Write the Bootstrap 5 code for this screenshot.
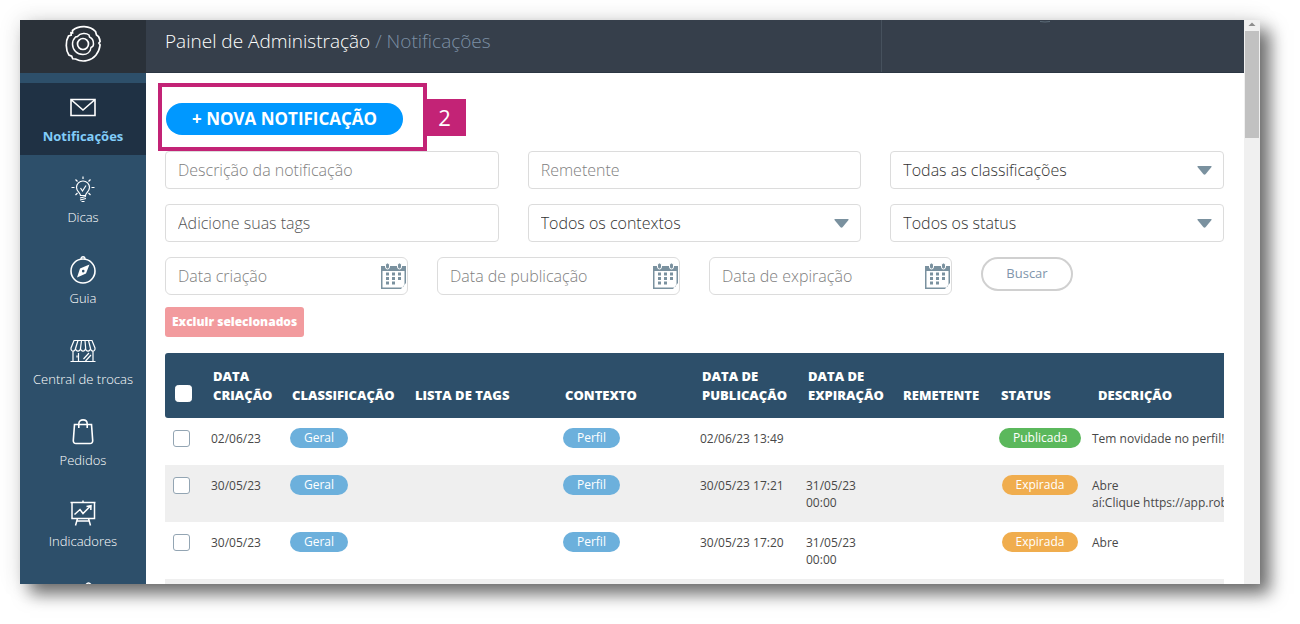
<!DOCTYPE html>
<html lang="pt-BR">
<head>
<meta charset="utf-8">
<meta name="viewport" content="width=device-width, initial-scale=1">
<title>Painel de Administração / Notificações</title>
<link href="https://cdn.jsdelivr.net/npm/bootstrap@5.3.0/dist/css/bootstrap.min.css" rel="stylesheet">
<style>
:root{--navy:#2d4f6a;--line:#dcdcdc;--magenta:#c32376}
body{font-family:"Open Sans","Noto Sans",sans-serif;background:#fff;height:100vh;padding:20px 40px 40px 20px;overflow:hidden}
.app-frame{background:#fff;box-shadow:0 0 22px rgba(0,0,0,.12),10px 10px 16px rgba(0,0,0,.55)}
.side-bar{width:126px;background:var(--navy)}
.side-logo{height:53px;background:#2a3139;margin-bottom:10px}
.side-item{height:72px;margin-bottom:9px;padding-top:11px;color:#fff;font-size:13px;font-weight:300;line-height:20px;gap:4px}
.side-item.active{background:#1f3144;color:#82cdf9;font-weight:700}
.side-item svg{width:28px;height:28px;fill:none;stroke:#fff;stroke-width:1.3}
.top-bar{height:53px;background:#363f4b;border-bottom:1px solid #2b3643;font-size:19px;font-weight:300;line-height:43px}
.top-bar a{color:#fff}
.top-bar .crumb-here{color:#7d90a5}
.top-title{width:736px;padding-left:19px;border-right:1px solid #46515d}
.top-user{padding-left:158px;padding-top:1px}
.callout{margin-left:12px;margin-top:10px}
.callout-box{border:4px solid var(--magenta);padding:16px 20px 12px 4px}
.callout-num{background:var(--magenta);color:#fff;font-size:22px;line-height:37px;width:39px;height:37px;padding-right:4px;margin-top:16px}
.btn-new{background:#0098ff;color:#fff;font-size:17px;font-weight:700;line-height:32px;padding:0 26px}
.page-pad{padding:0 20px 0 19px}
.filters{gap:15px}
.filter-row{display:grid;grid-template-columns:repeat(3,1fr);gap:15px 29px}
.date-row{gap:29px}
.date-row .date-box{width:243px}
.field{height:38px;border:1px solid var(--line);border-radius:4px;font-size:16px;font-weight:300;line-height:24px;padding:0 12px;color:#333;background-color:#fff}
.field::placeholder{color:#808080;opacity:1}
.tags-field::placeholder{color:#555}
.date-box .field{border-radius:6px}
.date-box svg{right:1px;top:6px}
select.field{background-image:url("data:image/svg+xml,%3Csvg xmlns='http://www.w3.org/2000/svg' viewBox='0 0 15 9'%3E%3Cpath d='M1 0h13q1 0 .5 1L8.500 8.300q-1 .9-2 0L.500 1Q0 0 1 0z' fill='%237a919f'/%3E%3C/svg%3E");background-size:15px 9px;background-position:right 11px center}
.btn-search{border:2px solid #d0d0d0;color:#7f95ab;font-size:13px;width:92px;height:34px;padding:0}
.btn-drop{background:#f29b9e;color:#fff;font-size:12px;font-weight:800;height:30px;padding:0 7px;border-radius:3px;margin:12px 0 16px}
.grid-table{table-layout:fixed;font-size:12px;line-height:17px;color:#484848;margin:0}
.grid-table th{background:var(--navy);color:#fff;font-size:13px;line-height:19px;font-weight:800;padding:14px 10px 13px;vertical-align:bottom;white-space:nowrap}
.grid-table td{padding:10px 8px 11px;white-space:nowrap;line-height:17px;height:47px;overflow:hidden;background:#fff;vertical-align:top}
.grid-table tbody tr:nth-child(even) td{background:#efefef}
.grid-table thead th:first-child{border-radius:3px 0 0 3px;padding-bottom:16px}
.grid-table td:last-child{padding-left:4px;padding-right:0}
.grid-table .cell-text{padding-top:2px}
.row-check{width:17px;height:17px;border:1px solid #93a5b3;margin:2px 0 0;display:block}
.head-check{border-color:#fff}
.pill{border-radius:10px;color:#fff;line-height:20px;height:20px;padding:0 14px;display:inline-block;vertical-align:top}
.pill-blue{background:#6cb0dc}.pill-green{background:#5bb85c}.pill-amber{background:#f0ad4e}
.status-box{width:82px;text-align:center}
.fake-scroll{width:16px;background:#f0f0f0}
.fake-scroll span{height:107px;margin:3px 1px 0;background:#c1c1c1}
</style>
</head>
<body>
<div class="app-frame d-flex h-100">
  <nav class="side-bar flex-shrink-0 overflow-hidden" aria-label="Menu principal">
    <div class="side-logo d-flex justify-content-center pt-1">
      <svg width="38" height="40" viewBox="0 0 38 40" fill="none" stroke="#fff" stroke-width="1.7"><circle cx="19" cy="20" r="5.500"/><path d="M19 9.500c3-.4 4.500.3 6 1.500l.5 2c2.500 1 4 4 4 7 0 2-1 3-2.500 3.500-.5 4.500-4 7-8 7-6 0-10.500-4.500-10.500-10.500 0-3 1-5 3-7l2-.5c1.500-2 3-2.800 5.500-3z" stroke-width="1.500"/><path d="M8.500 6.500C15 .8 26 1.500 31.500 7.500l1 3.500 2 1.500c.8 1.500 1.500 3 1.600 5l-1.200 1.500 1.200 2c-1 8-6 14-13 15.500-4 1-8 .4-11.600-1.500l-2.800-.2-1-2.600-2.800-1.200C1.500 26 1.500 17 4.500 12l2.700-.8-.2-2.500 1.500.3z"/></svg>
    </div>
    <a href="#" class="side-item active d-flex flex-column align-items-center text-decoration-none" aria-current="page">
      <svg viewBox="0 0 28 28"><path d="M2 5.500h24v16H2zM2.500 6 14 16 25.500 6" stroke-width="1.600"/></svg>Notificações</a>
    <a href="#" class="side-item d-flex flex-column align-items-center text-decoration-none">
      <svg viewBox="0 0 28 28"><path d="M11.500 20.500c0-2.500-4-4-4-8a6.500 6.500 0 0 1 13 0c0 4-4 5.500-4 8zM11 23l6-1.500M11 25l6-1.500M12.500 26.500h3M11.500 13l2 3 3.500-5.500M14 1.500V4M6.500 4.500l2 2M21.500 4.500l-2 2M2.500 12.500h3M22.500 12.500h3M6.500 20l2-2M21.500 20l-2-2" stroke-width="1.200"/></svg>Dicas</a>
    <a href="#" class="side-item d-flex flex-column align-items-center text-decoration-none">
      <svg viewBox="0 0 28 28"><circle cx="14" cy="15" r="12" stroke-width="1.600"/><path d="M12 3c0-3 4-3 4 0"/><path fill="#fff" fill-rule="evenodd" stroke="none" d="M20.500 8.500 17 17.500 8 21.500l3-9zM14.200 13.800a1.300 1.300 0 1 0 .1 2.600 1.300 1.300 0 0 0-.1-2.600z"/></svg>Guia</a>
    <a href="#" class="side-item d-flex flex-column align-items-center text-decoration-none">
      <svg viewBox="0 0 28 28"><path d="M5 3.500h18l3 7.500c.5 4-4 4-4.500.5-.5 3.500-4.500 3.500-5 0-.5 3.500-4.500 3.500-5 0-.5 3.500-4.500 3.500-5 0C6 15 1.500 15 2 11zM9 3.500 6.500 11.500M12.500 3.500l-1 8M16 3.500l.7 8M19.500 3.500l2 8M4 14v10.500M9.500 16v8.500M24 14v10.500M1.500 24.500h25M14.500 22l5.500-6M16.500 24l5.500-6M8 18.500v2" stroke-width="1.200"/></svg>Central de trocas</a>
    <a href="#" class="side-item d-flex flex-column align-items-center text-decoration-none">
      <svg viewBox="0 0 28 28"><path d="M5.500 6.500h17l1.200 16c.1 2-1 3-2.700 3H7c-1.700 0-2.800-1-2.700-3zM9.800 10V6c0-5.500 8.400-5.500 8.400 0v4" stroke-width="1.600"/></svg>Pedidos</a>
    <a href="#" class="side-item d-flex flex-column align-items-center text-decoration-none">
      <svg viewBox="0 0 28 28"><path d="M1.500 3.500h25M3 3.500v16h22.500v-16M14 1.500v2M8.500 19.500l-2 7M19.500 19.500l2 7M8 22h12.500M5.500 15.500l5.500-5 3 4 7.500-7.500M17.500 7.500l4.500-.8-.2 4.300" stroke-width="1.500"/></svg>Indicadores</a>
    <a href="#" class="side-item d-flex flex-column align-items-center" aria-label="Próximo item">
      <svg viewBox="0 0 28 28"><path d="M17 4.500q2.500-3 5 0v6h-5z"/></svg></a>
  </nav>

  <div class="flex-grow-1 d-flex flex-column overflow-hidden">
    <header class="top-bar flex-shrink-0 d-flex">
      <div class="top-title"><a href="#" class="text-decoration-none">Painel de Administração</a> <span class="crumb-here">/ Notificações</span></div>
      <div class="top-user d-flex align-items-start"><svg width="10" height="2" viewBox="0 0 10 2" fill="none" stroke="#5c6c78" aria-hidden="true"><path d="M0 .5q5 1 10 0"/></svg></div>
    </header>
    <main class="overflow-hidden">
      <div class="callout d-flex align-items-start">
        <div class="callout-box"><button type="button" class="btn btn-new rounded-pill border-0 d-block">+ NOVA NOTIFICAÇÃO</button></div>
        <div class="callout-num text-center">2</div>
      </div>
      <div class="page-pad">
        <form class="filters d-flex flex-column">
          <div class="filter-row">
            <input class="form-control field" type="text" placeholder="Descrição da notificação" aria-label="Descrição da notificação">
            <input class="form-control field" type="text" placeholder="Remetente" aria-label="Remetente">
            <select class="form-select field" aria-label="Classificação"><option>Todas as classificações</option></select>
            <input class="form-control field tags-field" type="text" placeholder="Adicione suas tags" aria-label="Tags">
            <select class="form-select field" aria-label="Contexto"><option>Todos os contextos</option></select>
            <select class="form-select field" aria-label="Status"><option>Todos os status</option></select>
          </div>
          <div class="date-row d-flex align-items-start">
            <div class="date-box position-relative">
              <input class="form-control field" type="text" placeholder="Data criação" aria-label="Data criação">
              <svg class="position-absolute" width="26" height="26" viewBox="0 0 26 26"><use href="#cal"/></svg>
            </div>
            <div class="date-box position-relative">
              <input class="form-control field" type="text" placeholder="Data de publicação" aria-label="Data de publicação">
              <svg class="position-absolute" width="26" height="26" viewBox="0 0 26 26"><use href="#cal"/></svg>
            </div>
            <div class="date-box position-relative">
              <input class="form-control field" type="text" placeholder="Data de expiração" aria-label="Data de expiração">
              <svg class="position-absolute" width="26" height="26" viewBox="0 0 26 26"><defs><g id="cal" fill="#7a919f"><path fill-rule="evenodd" d="M0 3h25v17l-5 6H0zM1.500 8v16.500h18.500q3.500 0 3.500-4V8z"/><rect x="4.500" y="0" width="4" height="6" rx="2" stroke="#fff"/><rect x="16.500" y="0" width="4" height="6" rx="2" stroke="#fff"/><path d="M5 9.500h3v3H5zM11 9.500h3v3h-3zM17 9.500h3v3h-3zM5 14h3v3H5zM11 14h3v3h-3zM17 14h3v3h-3zM5 18.500h3v3H5zM11 18.500h3v3h-3z"/></g></defs><use href="#cal"/></svg>
            </div>
            <button type="submit" class="btn btn-search rounded-pill">Buscar</button>
          </div>
        </form>
        <button type="button" class="btn btn-drop border-0 d-block">Excluir selecionados</button>
        <table class="table table-borderless grid-table">
          <colgroup><col style="width:38px"><col style="width:79px"><col style="width:123px"><col style="width:150px"><col style="width:137px"><col style="width:106px"><col style="width:95px"><col style="width:98px"><col style="width:97px"><col></colgroup>
          <thead><tr>
            <th><input type="checkbox" class="form-check-input row-check head-check" aria-label="Selecionar todas"></th>
            <th>DATA<br>CRIAÇÃO</th><th>CLASSIFICAÇÃO</th><th>LISTA DE TAGS</th><th>CONTEXTO</th><th>DATA DE<br>PUBLICAÇÃO</th><th>DATA DE<br>EXPIRAÇÃO</th><th>REMETENTE</th><th>STATUS</th><th>DESCRIÇÃO</th>
          </tr></thead>
          <tbody>
            <tr>
              <td><input type="checkbox" class="form-check-input row-check" aria-label="Selecionar notificação"></td>
              <td><div class="cell-text">02/06/23</div></td>
              <td><span class="pill pill-blue">Geral</span></td><td></td>
              <td><span class="pill pill-blue">Perfil</span></td>
              <td><div class="cell-text">02/06/23 13:49</div></td><td></td><td></td>
              <td><div class="status-box"><span class="pill pill-green">Publicada</span></div></td>
              <td><div class="cell-text">Tem novidade no perfil!</div></td>
            </tr>
            <tr>
              <td><input type="checkbox" class="form-check-input row-check" aria-label="Selecionar notificação"></td>
              <td><div class="cell-text">30/05/23</div></td>
              <td><span class="pill pill-blue">Geral</span></td><td></td>
              <td><span class="pill pill-blue">Perfil</span></td>
              <td><div class="cell-text">30/05/23 17:21</div></td>
              <td><div class="cell-text">31/05/23<br>00:00</div></td><td></td>
              <td><div class="status-box"><span class="pill pill-amber">Expirada</span></div></td>
              <td><div class="cell-text">Abre<br>aí:Clique https://app.rob</div></td>
            </tr>
            <tr>
              <td><input type="checkbox" class="form-check-input row-check" aria-label="Selecionar notificação"></td>
              <td><div class="cell-text">30/05/23</div></td>
              <td><span class="pill pill-blue">Geral</span></td><td></td>
              <td><span class="pill pill-blue">Perfil</span></td>
              <td><div class="cell-text">30/05/23 17:20</div></td>
              <td><div class="cell-text">31/05/23<br>00:00</div></td><td></td>
              <td><div class="status-box"><span class="pill pill-amber">Expirada</span></div></td>
              <td><div class="cell-text">Abre</div></td>
            </tr>
            <tr><td colspan="10"></td></tr>
          </tbody>
        </table>
      </div>
    </main>
  </div>
  <div class="fake-scroll flex-shrink-0 d-flex flex-column" aria-hidden="true">
    <svg width="16" height="8" viewBox="0 0 16 8"><path d="M4.500 6 8 2.500 11.500 6z" fill="#8d8d8d"/></svg>
    <span></span>
  </div>
</div>
<script src="https://cdn.jsdelivr.net/npm/bootstrap@5.3.0/dist/js/bootstrap.bundle.min.js"></script>
</body>
</html>
